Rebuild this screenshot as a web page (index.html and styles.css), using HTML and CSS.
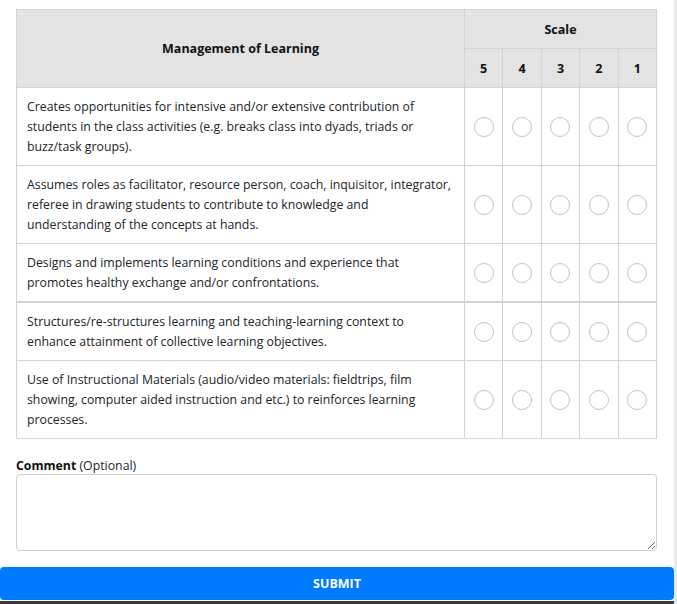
FILE: index.html
```html
<!DOCTYPE html>
<html>
<head>
<meta charset="utf-8">
<link rel="stylesheet" href="styles.css">
</head>
<body>
<div class="page">
  <div class="main">
    <div class="content">
      <table class="eval">
        <thead>
          <tr>
            <th rowspan="2" class="crit-head">Management of Learning</th>
            <th colspan="5" class="scale-head">Scale</th>
          </tr>
          <tr class="nums">
            <th>5</th><th>4</th><th>3</th><th>2</th><th>1</th>
          </tr>
        </thead>
        <tbody>
          <tr>
            <td class="crit">Creates opportunities for intensive and/or extensive contribution of students in the class activities (e.g. breaks class into dyads, triads or buzz/task groups).</td>
            <td class="opt"><input type="radio" name="q1"></td>
            <td class="opt"><input type="radio" name="q1"></td>
            <td class="opt"><input type="radio" name="q1"></td>
            <td class="opt"><input type="radio" name="q1"></td>
            <td class="opt"><input type="radio" name="q1"></td>
          </tr>
          <tr>
            <td class="crit">Assumes roles as facilitator, resource person, coach, inquisitor, integrator, referee in drawing students to contribute to knowledge and understanding of the concepts at hands.</td>
            <td class="opt"><input type="radio" name="q2"></td>
            <td class="opt"><input type="radio" name="q2"></td>
            <td class="opt"><input type="radio" name="q2"></td>
            <td class="opt"><input type="radio" name="q2"></td>
            <td class="opt"><input type="radio" name="q2"></td>
          </tr>
          <tr class="thick">
            <td class="crit">Designs and implements learning conditions and experience that promotes healthy exchange and/or confrontations.</td>
            <td class="opt"><input type="radio" name="q3"></td>
            <td class="opt"><input type="radio" name="q3"></td>
            <td class="opt"><input type="radio" name="q3"></td>
            <td class="opt"><input type="radio" name="q3"></td>
            <td class="opt"><input type="radio" name="q3"></td>
          </tr>
          <tr>
            <td class="crit">Structures/re-structures learning and teaching-learning context to enhance attainment of collective learning objectives.</td>
            <td class="opt"><input type="radio" name="q4"></td>
            <td class="opt"><input type="radio" name="q4"></td>
            <td class="opt"><input type="radio" name="q4"></td>
            <td class="opt"><input type="radio" name="q4"></td>
            <td class="opt"><input type="radio" name="q4"></td>
          </tr>
          <tr>
            <td class="crit">Use of Instructional Materials (audio/video materials: fieldtrips, film showing, computer aided instruction and etc.) to reinforces learning processes.</td>
            <td class="opt"><input type="radio" name="q5"></td>
            <td class="opt"><input type="radio" name="q5"></td>
            <td class="opt"><input type="radio" name="q5"></td>
            <td class="opt"><input type="radio" name="q5"></td>
            <td class="opt"><input type="radio" name="q5"></td>
          </tr>
        </tbody>
      </table>
      <label class="comment-label"><b>Comment</b> (Optional)</label>
      <textarea class="comment"></textarea>
    </div>
    <button class="submit">SUBMIT</button>
    <div class="bottom-bar"></div>
  </div>
  <div class="scrollbar"></div>
</div>
</body>
</html>
```
FILE: styles.css
```css
* { box-sizing: border-box; }
html, body { margin: 0; padding: 0; background: #fff; }
body {
  font-family: "Open Sans", "Noto Sans", sans-serif;
  font-size: 12.3px;
  color: #212529;
}
.page {
  display: flex;
  width: 677px;
  height: 604px;
  overflow: hidden;
}
.main {
  width: 674px;
  display: flex;
  flex-direction: column;
}
.scrollbar {
  width: 3px;
  background: #e8e8e8;
}
.content {
  padding: 9px 17px 0 16px;
  display: flex;
  flex-direction: column;
}
.eval {
  border-collapse: collapse;
  width: 641px;
  table-layout: fixed;
}
.eval th, .eval td {
  border: 1px solid #d3d3d3;
}
.eval thead th {
  background: #e3e3e3;
  font-weight: 700;
  font-size: 12.5px;
  color: #111;
  height: 39px;
  text-align: center;
  padding: 0;
}
.crit-head { width: 448px; }
.eval td.crit {
  padding: 9px 9px 8px 10px;
  line-height: 20px;
  vertical-align: middle;
}
.eval td.opt {
  text-align: center;
  vertical-align: middle;
  padding: 0;
  line-height: 16px;
}
.eval tr.thick td { border-bottom: 2px solid #d3d3d3; }
.opt input {
  appearance: none;
  -webkit-appearance: none;
  width: 20px;
  height: 20px;
  margin: 0;
  border: 1px solid #c2c2c2;
  border-radius: 50%;
  background: #fff;
  display: inline-block;
  vertical-align: middle;
}
.comment-label {
  margin-top: 18px;
  height: 17px;
  line-height: 17px;
  color: #212529;
}
.comment-label b { color: #111; }
.comment {
  height: 77px;
  width: 641px;
  border: 1px solid #d0d0d0;
  border-radius: 4px;
  resize: vertical;
  font-family: inherit;
}
.submit {
  margin-top: 16px;
  height: 33px;
  width: 674px;
  border: none;
  border-radius: 4px;
  background: #007bff;
  color: #fff;
  font-family: inherit;
  font-weight: 700;
  font-size: 12.5px;
  padding: 0;
}
.bottom-bar {
  flex: 1;
  background: #3a3a3a;
  margin-top: 1px;
}
```
